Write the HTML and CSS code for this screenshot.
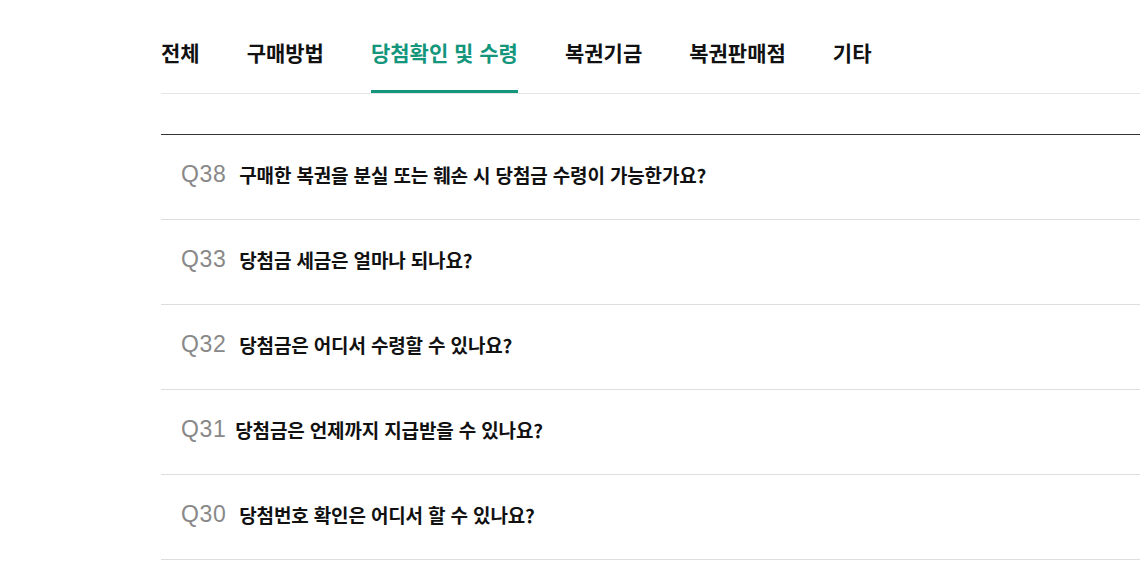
FILE: index.html
```html
<!DOCTYPE html>
<html lang="ko">
<head>
<meta charset="utf-8">
<title>FAQ</title>
<link rel="stylesheet" href="styles.css">
</head>
<body>
<div class="wrap">
  <nav class="tabs">
    <a class="tab">전체</a>
    <a class="tab">구매방법</a>
    <a class="tab active">당첨확인 및 수령</a>
    <a class="tab">복권기금</a>
    <a class="tab">복권판매점</a>
    <a class="tab">기타</a>
  </nav>
  <ul class="faq">
    <li class="item"><span class="qno">Q38</span><span class="qtext">구매한 복권을 분실 또는 훼손 시 당첨금 수령이 가능한가요?</span></li>
    <li class="item"><span class="qno">Q33</span><span class="qtext">당첨금 세금은 얼마나 되나요?</span></li>
    <li class="item"><span class="qno">Q32</span><span class="qtext">당첨금은 어디서 수령할 수 있나요?</span></li>
    <li class="item"><span class="qno narrow">Q31</span><span class="qtext">당첨금은 언제까지 지급받을 수 있나요?</span></li>
    <li class="item"><span class="qno">Q30</span><span class="qtext">당첨번호 확인은 어디서 할 수 있나요?</span></li>
  </ul>
</div>
</body>
</html>
```
FILE: styles.css
```css
html, body {
  margin: 0;
  padding: 0;
  background: #fff;
  overflow: hidden;
}
body {
  font-family: "Noto Sans CJK KR", "Noto Sans", sans-serif;
  color: #111;
}
.wrap {
  padding-left: 161px;
  width: 1200px;
}
.tabs {
  display: flex;
  gap: 47px;
  border-bottom: 1px solid #e5e5e5;
}
.tab {
  display: block;
  font-size: 21px;
  font-weight: 700;
  line-height: 30px;
  padding-top: 37px;
  padding-bottom: 23px;
  border-bottom: 3px solid transparent;
  color: #111;
}
.tab.active {
  color: #13967b;
  border-bottom-color: #13967b;
}
.faq {
  list-style: none;
  margin: 40px 0 0;
  padding: 0;
  border-top: 1px solid #333;
}
.item {
  display: flex;
  align-items: center;
  height: 84px;
  border-bottom: 1px solid #ddd;
  padding-left: 20px;
  box-sizing: content-box;
}
.qno {
  font-family: "Liberation Sans", Arial, sans-serif;
  font-size: 23px;
  color: #888;
  letter-spacing: 0.6px;
  margin-right: 13px;
  line-height: 1;
  position: relative;
  top: -3px;
}
.qno.narrow {
  margin-right: 9px;
}
.qtext {
  font-size: 19px;
  font-weight: 700;
  color: #111;
  letter-spacing: -0.15px;
  line-height: 1;
  position: relative;
  top: -3px;
}
```
